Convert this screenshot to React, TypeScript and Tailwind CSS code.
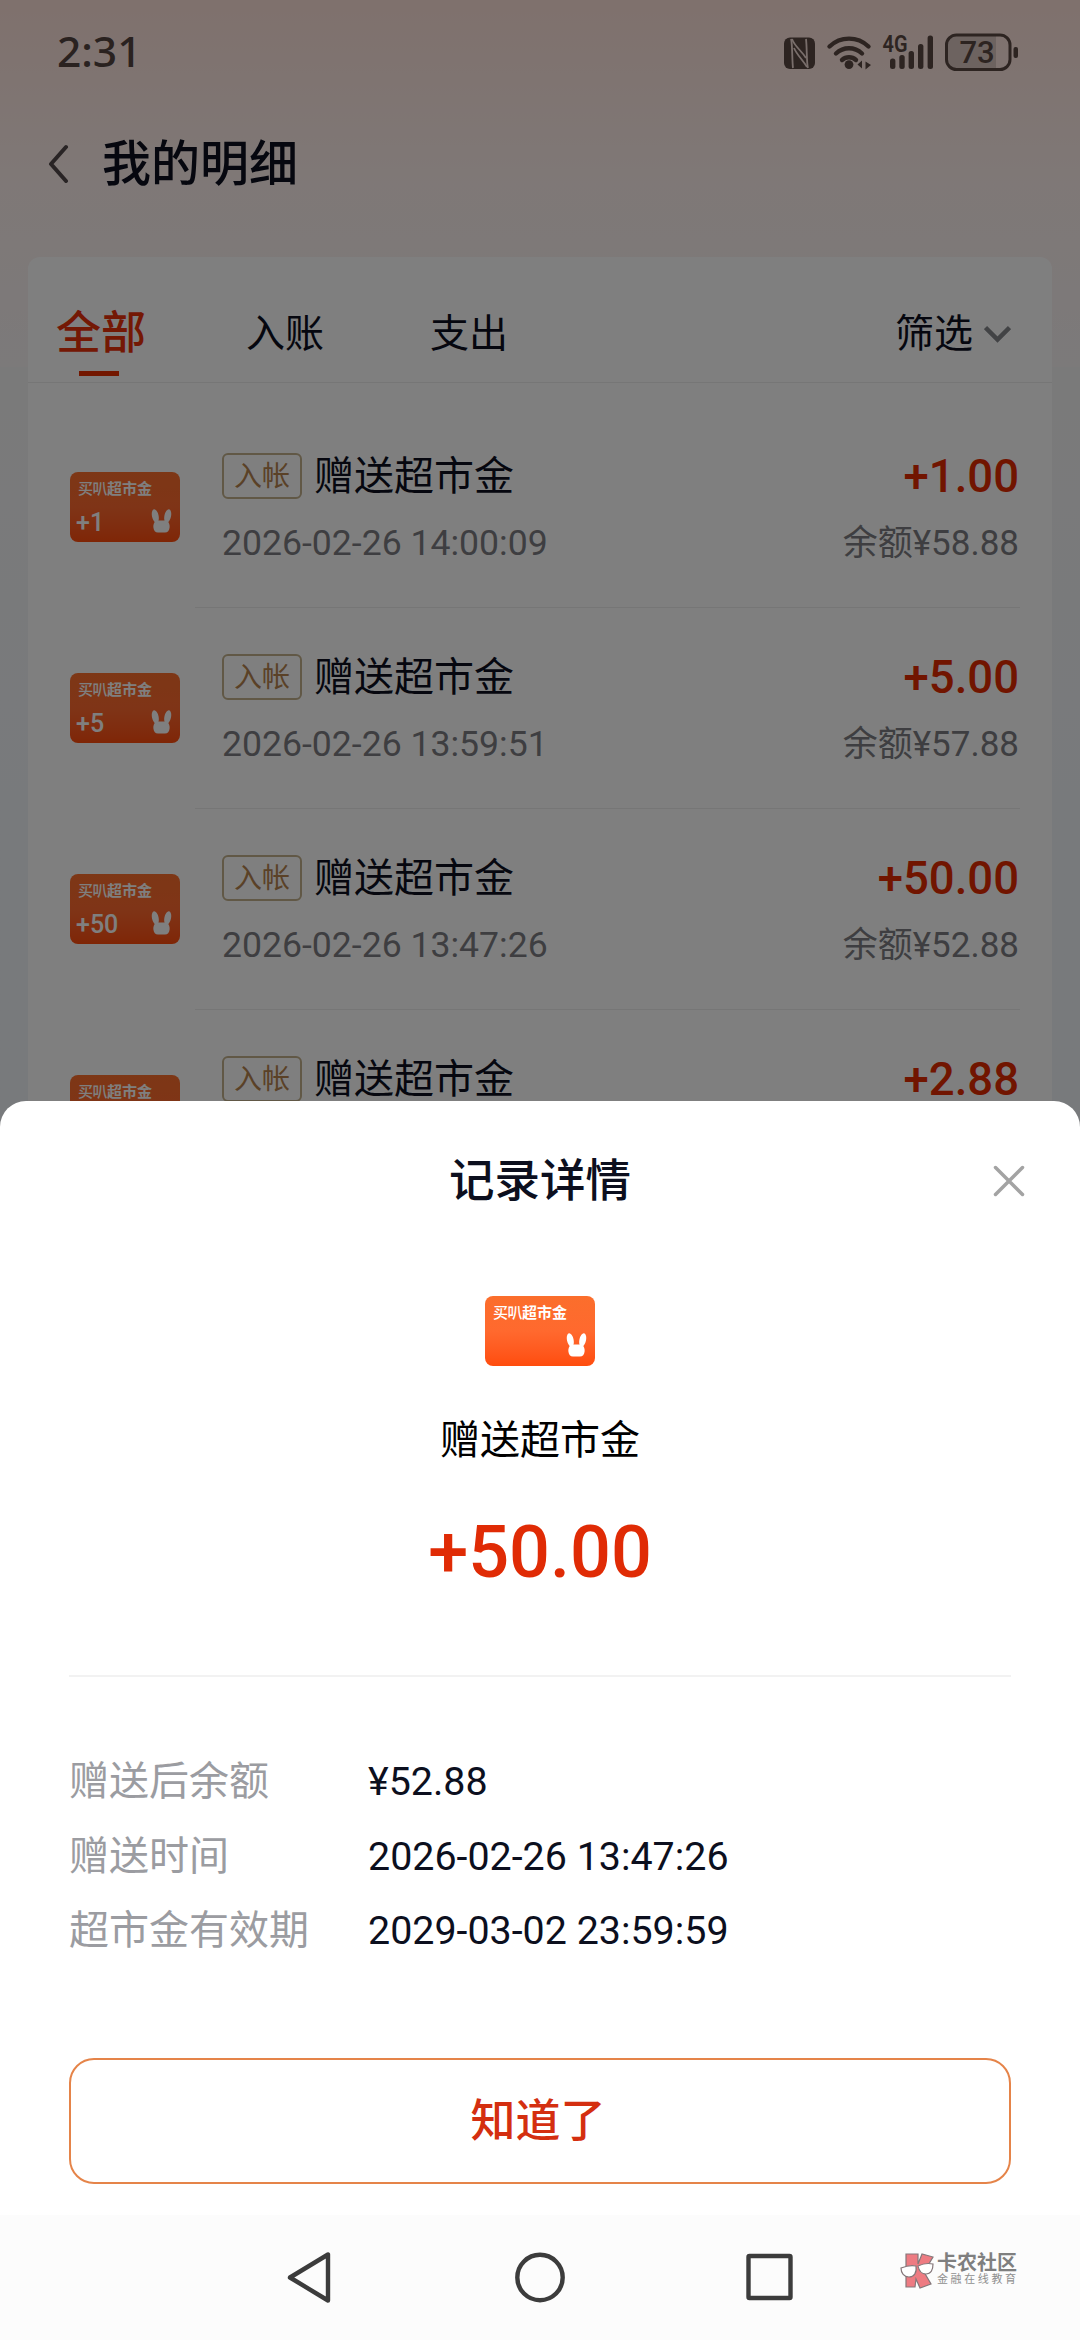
import { ReactNode } from "react";

interface RecordItem {
  id: number;
  gift?: string;
  time?: string;
  amount: string;
  balance?: string;
}

const RECORDS: RecordItem[] = [
  { id: 1, gift: "+1", time: "2026-02-26 14:00:09", amount: "+1.00", balance: "余额¥58.88" },
  { id: 2, gift: "+5", time: "2026-02-26 13:59:51", amount: "+5.00", balance: "余额¥57.88" },
  { id: 3, gift: "+50", time: "2026-02-26 13:47:26", amount: "+50.00", balance: "余额¥52.88" },
  { id: 4, amount: "+2.88" },
];

const DETAILS = [
  { label: "赠送后余额", value: "¥52.88" },
  { label: "赠送时间", value: "2026-02-26 13:47:26" },
  { label: "超市金有效期", value: "2029-03-02 23:59:59" },
];

function StatusIcons() {
  return (
    <svg width="240" height="44" viewBox="0 0 240 44" fill="#5a4843">
      {/* NFC */}
      <rect x="4" y="7.500" width="31" height="31.500" rx="6" />
      <g fill="none" stroke="#f3ddd6" strokeWidth="1.800">
        <path d="M11 9c1.500 4 1 22 2 29" />
        <path d="M28 38c-1.500-4-1-22-2-29" />
        <path d="M12 9c3 8 9 11 14 19" />
        <path d="M14 18c3 7 8 11 13 19" />
      </g>
      {/* wifi */}
      <g fill="none" stroke="#5a4843" strokeWidth="4.400" strokeLinecap="round">
        <path d="M49.500 16.500c11-10.500 28-10.500 39 0" />
        <path d="M56 23.500c7.500-7 18.500-7 26 0" />
        <path d="M62 30c4-3.600 10-3.600 14 0" />
      </g>
      <circle cx="69" cy="34.600" r="4.400" />
      <path d="M82 30.500v8l-4.500-4zM85.500 31.500v8l5.500-4.500z" />
      {/* signal */}
      <text x="102.500" y="22" fontSize="23" fontWeight="600" textLength="25" lengthAdjust="spacingAndGlyphs" fontFamily="Roboto, sans-serif">
        4G
      </text>
      <rect x="110" y="28.500" width="5.400" height="10.500" rx="2.500" />
      <rect x="119.300" y="25" width="5.400" height="14" rx="2.500" />
      <rect x="128.600" y="21" width="5.400" height="18" rx="2.500" />
      <rect x="138" y="14" width="5.400" height="25" rx="2.500" />
      <rect x="147.600" y="5.500" width="5.400" height="33.500" rx="2.500" />
      {/* battery */}
      <path d="M177 6h39v33h-39a9 9 0 0 1-9-9V15a9 9 0 0 1 9-9z" fill="#dac7c1" />
      <rect x="166.500" y="5" width="63.500" height="34.500" rx="10" fill="none" stroke="#5a4843" strokeWidth="3" />
      <rect x="233.500" y="17" width="4.500" height="11" rx="2" />
      <text x="197" y="33" fontSize="31" fontWeight="500" textAnchor="middle" fontFamily="Roboto, sans-serif">
        73
      </text>
    </svg>
  );
}

function Bunny() {
  return (
    <svg width="21" height="25" viewBox="0 0 21 25" fill="white">
      <ellipse cx="4.300" cy="7" rx="3.300" ry="6.800" transform="rotate(-12 4.300 7)" />
      <ellipse cx="16.700" cy="7" rx="3.300" ry="6.800" transform="rotate(12 16.700 7)" />
      <path d="M5 11.500h11c2 2 3 4.500 2.600 7-.3 3-1.900 5-4.600 5H7c-2.700 0-4.300-2-4.600-5-.4-2.500.6-5 2.600-7z" />
    </svg>
  );
}

function GiftCard({ gift }: { gift?: string }) {
  return (
    <div className="flex h-[70px] w-[110px] shrink-0 flex-col justify-between rounded-lg bg-linear-to-b from-[#fb6e2c] via-[#ff692e] to-[#ff4c0c] px-2 pt-[9px] pb-2 text-white">
      <div className="flex h-4 items-center whitespace-nowrap text-[15px] leading-4">
        <span className="font-medium tracking-[-0.5px]">买叭</span>
        <span className="font-bold">超市金</span>
      </div>
      <div className="flex h-[25px] items-end justify-between">
        <span className="-ml-0.5 text-[25px] leading-[22px] font-medium">{gift}</span>
        <Bunny />
      </div>
    </div>
  );
}

function Tab({ children, active }: { children: ReactNode; active?: boolean }) {
  return (
    <div className="flex flex-col items-center">
      <span
        className={
          active
            ? "text-[45px] leading-[50px] font-medium text-[#e83008]"
            : "text-[39px] leading-[50px] text-[#0c0f1e]"
        }
      >
        {children}
      </span>
      {active && <span className="mt-[12px] mr-1 h-[5px] w-10 bg-[#e62e00]" />}
    </div>
  );
}

function RecordRow({ record }: { record: RecordItem }) {
  return (
    <div className="flex h-[201px] pl-[42px]">
      <div className="pt-[65px]">
        <GiftCard gift={record.gift} />
      </div>
      <div className="mr-8 ml-[15px] flex flex-1 justify-between border-b border-[#ececec] pt-[46px] pr-px pl-[27px]">
        <div>
          <div className="flex h-[46px] items-center">
            <span className="mr-[12px] flex h-[46px] w-[80px] items-center justify-center rounded-md border-2 border-[#c2b08c] pt-0.5 text-[28px] leading-none text-[#b5834f]">
              入帐
            </span>
            <span className="pt-0.5 text-[40px] leading-[46px] text-[#0c0f1e]">赠送超市金</span>
          </div>
          {record.time && (
            <div className="mt-[23px] text-[35.6px] leading-[42px] text-[#7c7d82]">{record.time}</div>
          )}
        </div>
        <div className="pt-px text-right">
          <div className="text-[45.5px] leading-[46px] font-medium text-[#e32a00]">{record.amount}</div>
          {record.balance && (
            <div className="mt-[23px] text-[35px] leading-[42px] text-[#7c7d82]">{record.balance}</div>
          )}
        </div>
      </div>
    </div>
  );
}

function RecordSheet() {
  return (
    <div className="absolute inset-x-0 bottom-0 flex h-[1239px] flex-col rounded-t-[26px] bg-white">
      <div className="flex h-[160px] items-center justify-between px-[55px]">
        <span className="w-8" />
        <h2 className="pt-0.5 text-[45.5px] leading-none font-medium text-[#0c0f1e]">记录详情</h2>
        <svg width="32" height="32" viewBox="0 0 32 32" stroke="#a3a3a3" strokeWidth="3.500" strokeLinecap="round">
          <path d="M2.500 2.500l27 27M29.500 2.500l-27 27" />
        </svg>
      </div>

      <div className="mx-[69px] flex h-[416px] flex-col items-center border-b-2 border-[#f2f2f2] pt-[35px]">
        <GiftCard />
        <div className="mt-[52px] text-[40px] leading-[46px] text-black">赠送超市金</div>
        <div className="mt-[49px] text-[72px] leading-[80px] font-medium text-[#e02b05]">+50.00</div>
      </div>

      <div className="mx-[69px] mt-[68px]">
        {DETAILS.map((item) => (
          <div key={item.label} className="flex h-[74.5px] items-center leading-[50px]">
            <span className="w-[299px] text-[40px] text-[#9b9ca1]">{item.label}</span>
            <span className="text-[39.4px] text-[#0c0f1e]">{item.value}</span>
          </div>
        ))}
      </div>

      <button className="mx-[69px] mt-[89.5px] h-[126px] shrink-0 rounded-[25px] border-2 border-[#e58449] pr-1 text-[45px] leading-none font-medium text-[#d42f10]">
        知道了
      </button>

      <NavBar />
    </div>
  );
}

function NavBar() {
  return (
    <div className="relative mt-auto flex h-[125px] shrink-0 items-center justify-center bg-[#fcfcfc]">
      <svg width="510" height="56" viewBox="0 0 510 56" fill="none" stroke="#3c3c3c" strokeWidth="4.400" strokeLinejoin="round">
        <path d="M43 4.500v46L5 27.500z" />
        <circle cx="255" cy="27.500" r="22.700" />
        <rect x="463.500" y="6" width="42" height="42" rx="1" />
      </svg>
      <div className="absolute top-[36px] left-[900px] flex items-center gap-px">
        <svg width="36" height="38" viewBox="0 0 36 38" stroke="#85777a" strokeWidth="1.200">
          <path d="M6 3h12v10l4-10 11 3-9 15 7 12-11 4-4-9-1 8H6z" fill="#ee7b82" />
          <path d="M1 17c5-2 11-3 15-2 1 7-2 11-7 11-5 0-8-4-8-9zM18 15c4-2 10-3 15-2 0 6-2 10-7 10-5 0-7-3-8-8z" fill="#fff" />
        </svg>
        <div className="whitespace-nowrap">
          <div className="text-[20px] leading-[20px] font-bold text-[#7f7f7f]">卡农社区</div>
          <div className="text-[11px] leading-[14px] tracking-[2.6px] text-[#8f8f8f]">金融在线教育</div>
        </div>
      </div>
    </div>
  );
}

export default function App() {
  return (
    <div className="relative h-[2340px] w-[1080px] overflow-hidden font-['Roboto','Noto_Sans_CJK_SC',sans-serif]">
      <div className="h-[2340px] bg-linear-to-b from-[#f5f5f5] from-[400px] to-[#f1f4f9] to-[800px]">
        <div className="h-[367px] bg-linear-to-b from-[#ffe2da] via-[#fef1ee] to-[#f8f4f5]">
          <div className="flex h-[103px] items-center justify-between pr-[60px] pl-[57px]">
            <span className="font-['Noto_Sans',sans-serif] text-[42.5px] leading-none font-medium text-[#544440]">2:31</span>
            <StatusIcons />
          </div>

          <div className="flex h-[120px] items-center pl-[47px]">
            <svg width="24" height="40" viewBox="0 0 24 40" fill="none" stroke="#53494a" strokeWidth="4" strokeLinecap="round" strokeLinejoin="round">
              <path d="M19 4L4 21 19 38" />
            </svg>
            <h1 className="ml-[31px] pt-0.5 text-[49px] leading-none font-medium text-[#0c0f1e]">我的明细</h1>
          </div>

          <div className="mx-7 mt-[34px] h-[2000px] rounded-xl bg-white">
            <div className="flex h-[126px] items-start border-b border-[#ececec] pt-[52px] pr-[41px] pl-7">
              <Tab active>全部</Tab>
              <div className="ml-[100px]">
                <Tab>入账</Tab>
              </div>
              <div className="ml-[106px]">
                <Tab>支出</Tab>
              </div>
              <div className="ml-auto flex h-[50px] items-center text-[39px] leading-[50px] text-[#0c0f1e]">
                筛选
                <svg className="ml-[11px]" width="27" height="18" viewBox="0 0 27 18" fill="none" stroke="#85868b" strokeWidth="4.500">
                  <path d="M1.500 2.500l12 12 12-12" />
                </svg>
              </div>
            </div>
            <div className="pt-6">
              {RECORDS.map((record) => (
                <RecordRow key={record.id} record={record} />
              ))}
            </div>
          </div>
        </div>
      </div>

      <div className="absolute inset-0 bg-black/50" />
      <RecordSheet />
    </div>
  );
}
